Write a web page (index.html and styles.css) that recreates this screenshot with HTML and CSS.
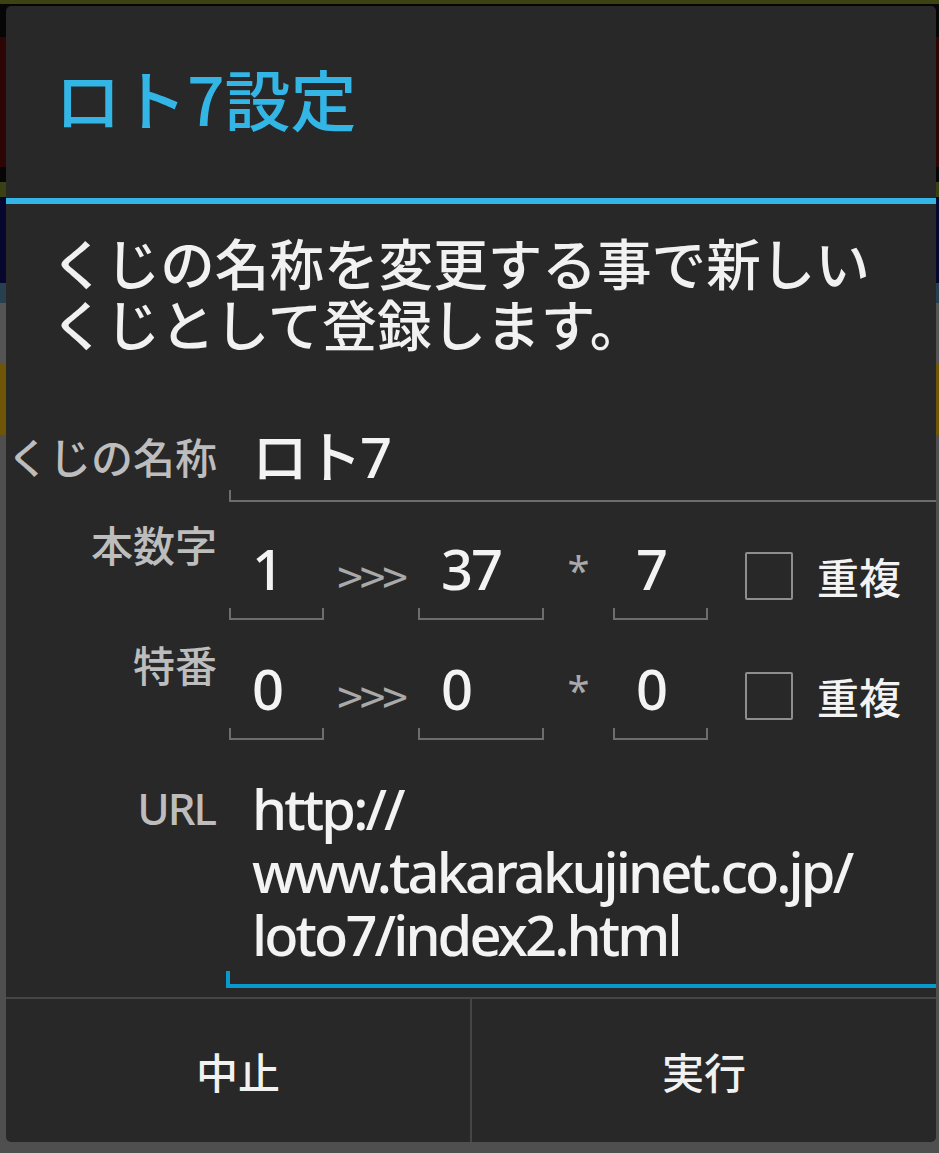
FILE: index.html
```html
<!DOCTYPE html>
<html lang="ja">
<head>
<meta charset="utf-8">
<title>ロト7設定</title>
<link rel="stylesheet" href="styles.css">
</head>
<body>
<div class="dialog">
  <div class="title">ロト7設定</div>
  <div class="title-rule"></div>
  <div class="message">くじの名称を変更する事で新しい<br>くじとして登録します。</div>
  <div class="form">
    <div class="row row-name">
      <div class="label">くじの名称</div>
      <div class="edit edit-name">ロト7</div>
    </div>
    <div class="row row-num">
      <div class="label">本数字</div>
      <div class="edit edit-small">1</div>
      <div class="sep sep-arrow">&gt;&gt;&gt;</div>
      <div class="edit edit-mid">37</div>
      <div class="sep sep-star">*</div>
      <div class="edit edit-small">7</div>
      <div class="check"><span class="box"></span><span class="check-text">重複</span></div>
    </div>
    <div class="row row-num">
      <div class="label">特番</div>
      <div class="edit edit-small">0</div>
      <div class="sep sep-arrow">&gt;&gt;&gt;</div>
      <div class="edit edit-mid">0</div>
      <div class="sep sep-star">*</div>
      <div class="edit edit-small">0</div>
      <div class="check"><span class="box"></span><span class="check-text">重複</span></div>
    </div>
    <div class="row row-url">
      <div class="label label-latin">URL</div>
      <div class="edit edit-url">http://<br>www.takarakujinet.co.jp/<br>loto7/index2.html</div>
    </div>
  </div>
  <div class="buttons">
    <div class="btn">中止</div>
    <div class="btn">実行</div>
  </div>
</div>
</body>
</html>
```
FILE: styles.css
```css
html, body {
  margin: 0;
  padding: 0;
}
body {
  width: 939px;
  height: 1153px;
  box-sizing: border-box;
  padding: 6px 0 0 6px;
  overflow: hidden;
  background: linear-gradient(to bottom,
    #3d4212 0, #3d4212 4px,
    #060606 4px, #060606 37px,
    #2e0505 37px, #2e0505 167px,
    #060606 167px, #060606 182px,
    #3a3f14 182px, #3a3f14 197px,
    #07072e 197px, #07072e 283px,
    #27404f 283px, #27404f 303px,
    #545454 303px, #545454 363px,
    #6e5606 363px, #6e5606 435px,
    #4f4f4f 435px, #4f4f4f 100%);
  font-family: "Noto Sans CJK JP", "Noto Sans", sans-serif;
}
.dialog {
  width: 930px;
  height: 1136px;
  background: #282828;
  border-radius: 5px;
  display: flex;
  flex-direction: column;
  overflow: hidden;
  color: #f1f1f1;
}
.title {
  height: 192px;
  box-sizing: border-box;
  display: flex;
  align-items: center;
  padding-left: 49px;
  padding-bottom: 11px;
  color: #33b5e5;
  font-size: 66px;
  font-weight: 500;
  line-height: 80px;
}
.title-rule {
  height: 6px;
  background: #33b5e5;
}
.message {
  padding: 27px 10px 0 45px;
  font-size: 54.6px;
  font-weight: 500;
  line-height: 61px;
  color: #f1f1f1;
}
.form {
  margin-top: 68px;
}
.row {
  display: flex;
  align-items: flex-start;
}
.label {
  width: 223px;
  flex: none;
  box-sizing: border-box;
  padding-right: 12px;
  text-align: right;
  font-size: 42px;
  font-weight: 500;
  line-height: 70px;
  color: #bdbdbd;
  white-space: nowrap;
}
.label-latin {
  font-family: "Noto Sans", sans-serif;
  font-size: 44px;
  letter-spacing: -2px;
  line-height: 63px;
  padding-right: 14px;
}
.edit {
  box-sizing: border-box;
  font-family: "Noto Sans", "Noto Sans CJK JP", sans-serif;
  font-size: 56px;
  font-weight: 500;
  letter-spacing: -2px;
  line-height: 70px;
  padding-left: 23px;
  color: #f3f3f3;
  border-bottom: 2px solid #6d6d6d;
  background:
    linear-gradient(#6d6d6d, #6d6d6d) left bottom / 2px 10px no-repeat,
    linear-gradient(#6d6d6d, #6d6d6d) right bottom / 2px 10px no-repeat;
  flex: none;
}
.edit-name {
  flex: 1;
  padding-bottom: 9px;
  background: linear-gradient(#6d6d6d, #6d6d6d) left bottom / 2px 10px no-repeat;
}
.row-num {
  margin-top: 7px;
  height: 112px;
}
.row-num + .row-num {
  margin-top: 8px;
}
.row-num .edit {
  margin-top: 24px;
  padding-bottom: 15px;
}
.edit-small {
  width: 95px;
}
.edit-mid {
  width: 126px;
}
.sep {
  flex: none;
  text-align: center;
  line-height: 48px;
  color: #a9a9a9;
}
.sep-arrow {
  width: 94px;
  margin-top: 42px;
  font-family: "Noto Sans CJK JP", sans-serif;
  font-size: 46px;
  letter-spacing: -3px;
}
.sep-star {
  width: 69px;
  margin-top: 37px;
  font-family: "Noto Sans", sans-serif;
  font-size: 40px;
}
.check {
  flex: none;
  margin-top: 43px;
  margin-left: 37px;
  display: flex;
  align-items: center;
  height: 48px;
}
.box {
  width: 48px;
  height: 48px;
  box-sizing: border-box;
  border: 2px solid #8e8e8e;
  border-radius: 2px;
}
.check-text {
  margin-left: 24px;
  font-size: 42px;
  font-weight: 500;
  line-height: 48px;
  color: #f3f3f3;
}
.row-url {
  margin-top: 36px;
}
.edit-url {
  flex: 1;
  margin-left: -3px;
  line-height: 63px;
  letter-spacing: -2.9px;
  padding-left: 26px;
  padding-bottom: 18px;
  border-bottom: 4px solid #0a99cc;
  background: linear-gradient(#0a99cc, #0a99cc) left bottom / 4px 13px no-repeat;
}
.buttons {
  margin-top: auto;
  height: 145px;
  box-sizing: border-box;
  border-top: 2px solid #454545;
  display: flex;
}
.btn {
  flex: 1;
  display: flex;
  align-items: center;
  justify-content: center;
  font-size: 42px;
  font-weight: 500;
  color: #f1f1f1;
}
.btn + .btn {
  border-left: 2px solid #454545;
}
```
